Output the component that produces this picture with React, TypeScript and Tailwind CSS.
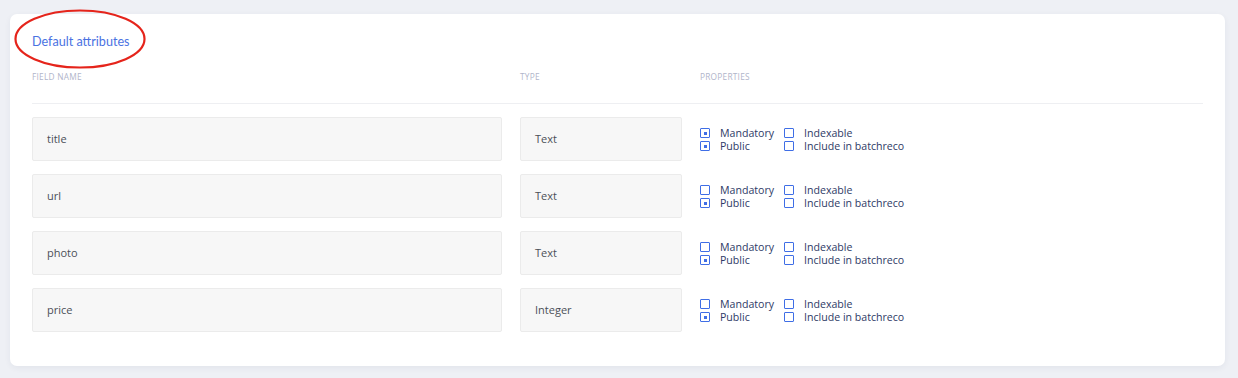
import React from "react";

const rows = [
  { name: "title", type: "Text", mandatory: true, public: true },
  { name: "url", type: "Text", mandatory: false, public: true },
  { name: "photo", type: "Text", mandatory: false, public: true },
  { name: "price", type: "Integer", mandatory: false, public: true },
];

function Check({ checked, label }: { checked: boolean; label: string }) {
  return (
    <div className="flex h-[13px] items-center">
      <span className="flex h-[10px] w-[10px] items-center justify-center rounded-[1px] border border-[#3f6ee6]">
        {checked && <span className="h-[3px] w-[3px] bg-[#3f6ee6]" />}
      </span>
      <span className="ml-[10px] text-[10.6px] leading-[13px] text-[#2e3a66]">{label}</span>
    </div>
  );
}

export default function App() {
  return (
    <div
      className="relative min-h-[378px] bg-[#eef0f5] pl-[10px] pr-[13px] pt-[14px] pb-[12px]"
      style={{ fontFamily: '"Open Sans", "Liberation Sans", sans-serif' }}
    >
      <div className="rounded-[7px] bg-white px-[22px] pb-[34px] pt-[20px] shadow-[0_2px_6px_rgba(40,50,90,0.06)]">
        <div
          className="text-[12.6px] leading-[16px] text-[#4a72e2]"
          style={{ fontFamily: 'Lato, "Noto Sans", sans-serif' }}
        >
          Default attributes
        </div>
        <div className="mt-[21px] flex text-[8.3px] uppercase leading-[11px] tracking-[0.03em] text-[#b0b5ca]">
          <div className="w-[488px]">Field name</div>
          <div className="w-[180px]">Type</div>
          <div>Properties</div>
        </div>
        <div className="mt-[21px] h-px bg-[#eeeff2]" />
        <div className="mt-[13px] flex flex-col gap-[13px]">
          {rows.map((r) => (
            <div key={r.name} className="flex items-center">
              <div className="flex h-[44px] w-[470px] items-center rounded-[2px] border border-[#ebebeb] bg-[#f7f7f7] px-[14px] text-[11px] text-[#4b4f58]">
                {r.name}
              </div>
              <div className="ml-[18px] flex h-[44px] w-[162px] items-center rounded-[2px] border border-[#ebebeb] bg-[#f7f7f7] px-[14px] text-[11px] text-[#4b4f58]">
                {r.type}
              </div>
              <div className="ml-[18px] flex pt-px">
                <div className="w-[84px]">
                  <Check checked={r.mandatory} label="Mandatory" />
                  <Check checked={r.public} label="Public" />
                </div>
                <div>
                  <Check checked={false} label="Indexable" />
                  <Check checked={false} label="Include in batchreco" />
                </div>
              </div>
            </div>
          ))}
        </div>
      </div>
      <svg
        className="pointer-events-none absolute left-0 top-0"
        width="200"
        height="90"
        viewBox="0 0 200 90"
      >
        <ellipse cx="80" cy="39" rx="64.5" ry="28.5" fill="none" stroke="#e5241b" strokeWidth="2.2" />
      </svg>
    </div>
  );
}
